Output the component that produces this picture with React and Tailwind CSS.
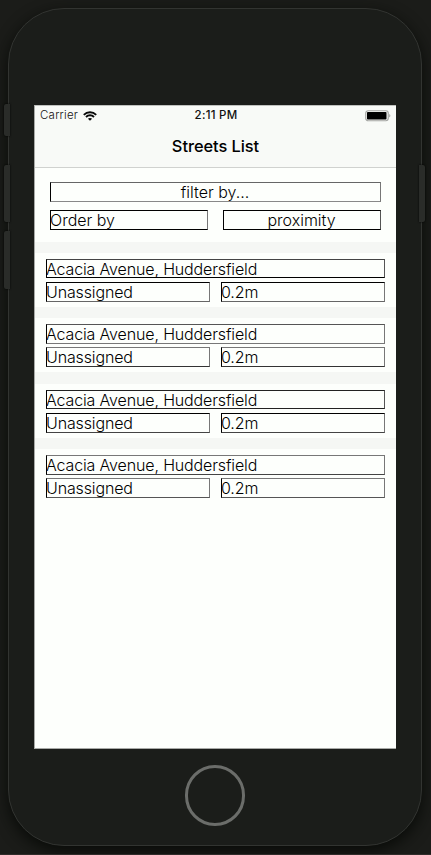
import React from "react";

const font = "font-['Inter','Noto_Sans',sans-serif]";

const streets = [
  {
    card: "h-[54px] pt-[6px]",
    title: "h-[19px] border-t-[#444] border-b-black border-r-[#555]",
    row: "mt-[4px] h-[20px]",
    cell: "border-t-black border-b-[#666]",
    gap: "mb-[11px]",
  },
  {
    card: "h-[54px] pt-[6px]",
    title: "h-[20px] border-t-[#555] border-b-[#777] border-r-[#777]",
    row: "mt-[3px] h-[20px]",
    cell: "border-t-[#777] border-b-[#333]",
    gap: "mb-[12px]",
  },
  {
    card: "h-[54px] pt-[6px]",
    title: "h-[19px] border-t-[#222] border-b-[#222] border-r-[#555]",
    row: "mt-[4px] h-[20px]",
    cell: "border-t-black border-b-[#444]",
    gap: "mb-[11px]",
  },
  {
    card: "h-[54px] pt-[6px]",
    title: "h-[20px] border-t-[#777] border-b-[#444] border-r-[#777]",
    row: "mt-[3px] h-[20px]",
    cell: "border-t-[#777] border-b-[#555]",
    gap: "",
  },
];

function Box({ className, children }) {
  return (
    <div className={`flex items-center border border-l-black whitespace-nowrap text-[16px] leading-[18px] font-light ${className}`}>
      <span className="-ml-px">{children}</span>
    </div>
  );
}

function StatusBar() {
  return (
    <div className="grid h-[20px] grid-cols-3 items-center pl-[5px] pr-[5px] text-[11.5px] leading-none">
      <div className="flex items-center gap-[5px] text-[#111]">
        <span className="font-light tracking-[0.22px]">Carrier</span>
        <svg className="-mt-px" width="14" height="10" viewBox="0 0 14 10" fill="none" stroke="#080808" strokeWidth="1.9">
          <path d="M0.8 3.8 C4.3 0.3 9.7 0.3 13.2 3.8" />
          <path d="M3 6 C5.2 3.7 8.8 3.7 11 6" />
          <path d="M7 9.8 L4.9 7.7 C6.1 6.6 7.9 6.6 9.1 7.7 Z" fill="#080808" stroke="none" />
        </svg>
      </div>
      <div className="pl-[1px] text-center font-medium tracking-[0.25px] text-[#111]">2:11 PM</div>
      <div className="flex justify-end">
        <svg width="26" height="12" viewBox="0 0 26 12">
          <rect x="0.75" y="0.75" width="22.5" height="10" rx="2.4" fill="#f8f9f7" stroke="#a5a7a4" strokeWidth="1.2" />
          <rect x="2" y="2" width="19.5" height="7.5" rx="0.8" fill="#000" />
          <path d="M24.2 4 C25.8 4.5 25.8 7 24.2 7.5 Z" fill="#a5a7a4" />
        </svg>
      </div>
    </div>
  );
}

function Screen() {
  return (
    <div className={`flex h-[644px] w-[362px] flex-col border-t border-b border-l border-t-[#c0c2bf] border-b-[#a8aaa7] border-l-[#a8aaa7] bg-[#fdfffc] text-black ${font}`}>
      <header className="h-[62px] border-b border-[#d0d2cf] bg-[#f8faf7]">
        <StatusBar />
        <h1 className="h-[41px] text-center text-[16.4px] leading-[41px] font-medium tracking-[-0.05px] text-black">Streets List</h1>
      </header>
      <main className="flex flex-col">
        <section className="flex h-[74px] flex-col pt-[14px] pr-[15px] pl-[15px]">
          <Box className="h-[20px] justify-center border-t-[#666] border-r-[#777] border-b-[#888]">filter by...</Box>
          <div className="mt-[8px] flex h-[20px] justify-between">
            <Box className="w-[158px] border-t-black border-r-[#777] border-b-black">Order by</Box>
            <Box className="w-[158px] justify-center border-t-black border-r-[#555] border-b-black">proximity</Box>
          </div>
        </section>
        <section className="flex flex-col bg-[#f5f7f4] pt-[11px]">
          {streets.map((s, i) => (
            <article key={i} className={`bg-[#fdfffc] pr-[11px] pl-[11px] tracking-[-0.14px] ${s.card} ${s.gap}`}>
              <Box className={s.title}>Acacia Avenue, Huddersfield</Box>
              <div className={`flex justify-between ${s.row}`}>
                <Box className={`w-[164px] border-r-[#777] ${s.cell}`}>Unassigned</Box>
                <Box className={`w-[164px] border-r-[#777] ${s.cell}`}>0.2m</Box>
              </div>
            </article>
          ))}
        </section>
      </main>
    </div>
  );
}

export default function App() {
  return (
    <div className="relative h-[855px] w-[431px] overflow-hidden border-b border-[#302c2a] bg-[#1b1c19] pt-[8px] pl-[8px]">
      <div className="flex h-[838px] w-[414px] flex-col items-center rounded-[56px] border border-[#323431] bg-[#1b1d1a] pt-[96px] shadow-[0_5px_15px_#090b08]">
        <Screen />
        <div className="mt-[16px] h-[61px] w-[60px] rounded-full border-[3px] border-[#6b6d6a]" />
      </div>
      <div className="absolute top-[104px] left-[4px] h-[32px] w-[6px] rounded-l-[2px] bg-[#2a2c29] shadow-[0_0_2px_#000]" />
      <div className="absolute top-[165px] left-[4px] h-[57px] w-[6px] rounded-l-[2px] bg-[#2a2c29] shadow-[0_0_2px_#000]" />
      <div className="absolute top-[231px] left-[4px] h-[58px] w-[6px] rounded-l-[2px] bg-[#2a2c29] shadow-[0_0_2px_#000]" />
      <div className="absolute top-[165px] left-[419px] h-[57px] w-[6px] rounded-r-[2px] bg-[#2a2c29] shadow-[0_0_2px_#000]" />
    </div>
  );
}
